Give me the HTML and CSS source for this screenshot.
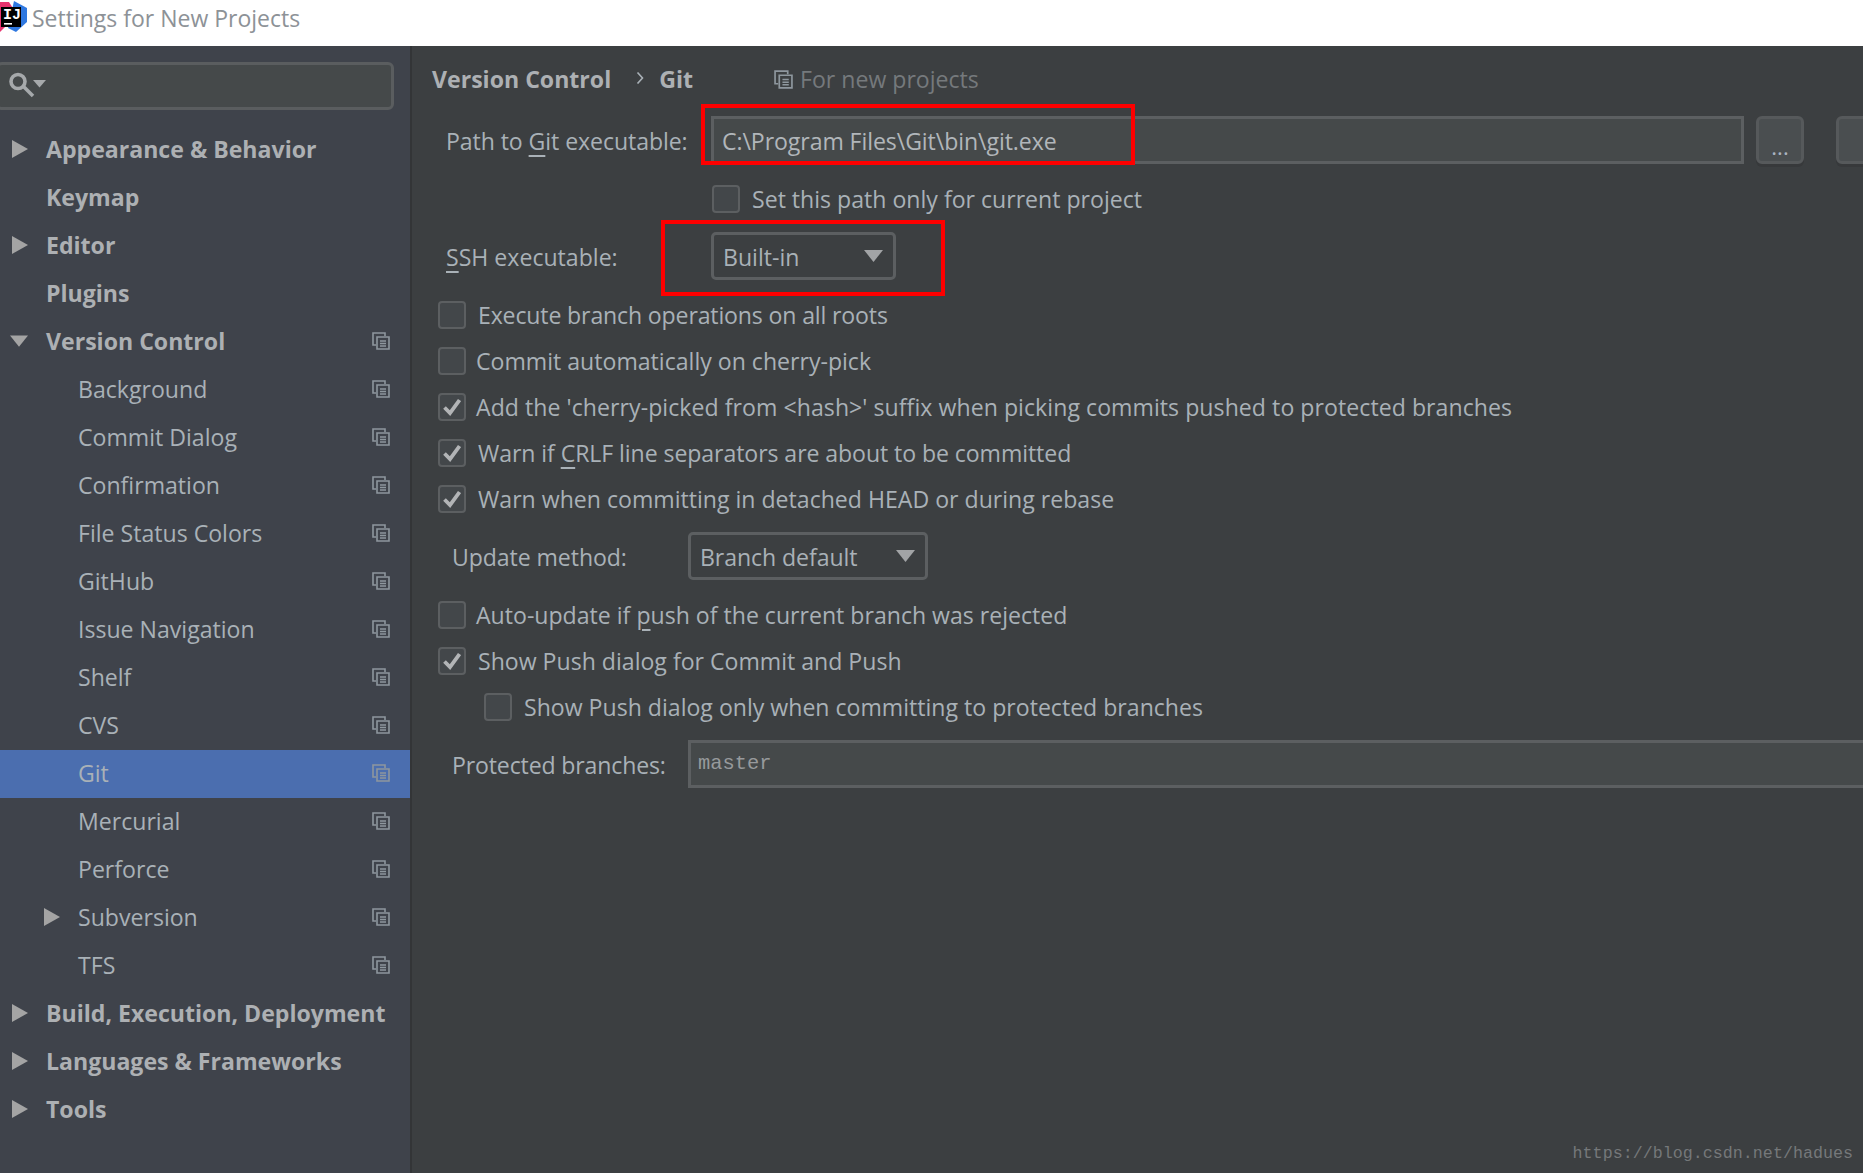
FILE: index.html
```html
<!DOCTYPE html>
<html lang="en">
<head>
<meta charset="utf-8">
<title>Settings for New Projects</title>
<link rel="stylesheet" href="styles.css">
</head>
<body>
<svg class="defs" width="0" height="0" aria-hidden="true">
  <symbol id="copy" viewBox="0 0 18 18">
    <path d="M4 13H1V1h12v3" fill="none" stroke="currentColor" stroke-width="1.6"/>
    <path d="M5 5h12v12H5z" fill="none" stroke="currentColor" stroke-width="1.6"/>
    <path d="M8 9h6M8 11.5h6M8 14h6" fill="none" stroke="currentColor" stroke-width="1.4"/>
  </symbol>
  <symbol id="arrow" viewBox="0 0 16 18"><path d="M0 0l16 9L0 18z" fill="currentColor"/></symbol>
  <symbol id="down" viewBox="0 0 16 10"><path d="M0 0h16L8 10z" fill="currentColor"/></symbol>
  <symbol id="check" viewBox="0 0 18 18"><path d="M1.5 9.500L7 15 16.500 2" fill="none" stroke="currentColor" stroke-width="3.8"/></symbol>
</svg>
<div class="page">
  <header class="titlebar">
    <svg class="logo" width="28" height="32" viewBox="0 0 28 32">
      <path d="M0 2l9 0 5 8-6 14-8 8z" fill="#e8336f"/>
      <path d="M14 1l13 7v14l-11 10-8-4z" fill="#2f78e0"/>
      <path d="M1 7h20v20H1z" fill="#000"/>
      <text x="3" y="19" class="logo-text">IJ</text>
      <path d="M4 23h8v1.6H4z" fill="#fff"/>
    </svg>
    <span class="title">Settings for New Projects</span>
  </header>
  <div class="main">
    <nav class="sidebar">
      <div class="search">
        <svg class="search-icon" width="44" height="28" viewBox="0 0 44 28">
          <circle cx="14" cy="9.500" r="7" fill="none" stroke="#a6a9ab" stroke-width="3.6"/>
          <path d="M19.500 14.500l9.500 9.500" stroke="#a6a9ab" stroke-width="3.6"/>
          <path d="M29 8h13l-6.500 7.500z" fill="#a6a9ab"/>
        </svg>
      </div>
      <ul class="tree">
        <li class="row top"><svg class="arrow"><use href="#arrow"/></svg>Appearance &amp; Behavior</li>
        <li class="row top">Keymap</li>
        <li class="row top"><svg class="arrow"><use href="#arrow"/></svg>Editor</li>
        <li class="row top">Plugins</li>
        <li class="row top"><svg class="arrow open"><use href="#down"/></svg>Version Control<svg class="copy"><use href="#copy"/></svg></li>
        <li class="row sub">Background<svg class="copy"><use href="#copy"/></svg></li>
        <li class="row sub">Commit Dialog<svg class="copy"><use href="#copy"/></svg></li>
        <li class="row sub">Confirmation<svg class="copy"><use href="#copy"/></svg></li>
        <li class="row sub">File Status Colors<svg class="copy"><use href="#copy"/></svg></li>
        <li class="row sub">GitHub<svg class="copy"><use href="#copy"/></svg></li>
        <li class="row sub">Issue Navigation<svg class="copy"><use href="#copy"/></svg></li>
        <li class="row sub">Shelf<svg class="copy"><use href="#copy"/></svg></li>
        <li class="row sub">CVS<svg class="copy"><use href="#copy"/></svg></li>
        <li class="row sub selected">Git<svg class="copy"><use href="#copy"/></svg></li>
        <li class="row sub">Mercurial<svg class="copy"><use href="#copy"/></svg></li>
        <li class="row sub">Perforce<svg class="copy"><use href="#copy"/></svg></li>
        <li class="row sub"><svg class="arrow"><use href="#arrow"/></svg>Subversion<svg class="copy"><use href="#copy"/></svg></li>
        <li class="row sub">TFS<svg class="copy"><use href="#copy"/></svg></li>
        <li class="row top"><svg class="arrow"><use href="#arrow"/></svg>Build, Execution, Deployment</li>
        <li class="row top"><svg class="arrow"><use href="#arrow"/></svg>Languages &amp; Frameworks</li>
        <li class="row top"><svg class="arrow"><use href="#arrow"/></svg>Tools</li>
      </ul>
    </nav>
    <section class="content">
      <div class="crumbs">
        <strong>Version Control</strong>
        <svg class="chev" width="8" height="12" viewBox="0 0 8 12"><path d="M1.500 0.500L6.500 6l-5 5.500" fill="none" stroke="currentColor" stroke-width="1.6"/></svg>
        <strong>Git</strong>
        <span class="scope"><svg class="copy-small"><use href="#copy"/></svg>For new projects</span>
      </div>
      <div class="form-row path-row">
        <label class="label path-label"><span class="narrow">Path to <u>G</u>it executable:</span></label>
        <div class="field path-field"><span class="narrow">C:\Program Files\Git\bin\git.exe</span></div>
        <div class="btn">...</div>
        <div class="btn btn-cut"></div>
      </div>
      <div class="check-row only-row"><span class="box"></span><span>Set this path only for current project</span></div>
      <div class="form-row ssh-row">
        <label class="label path-label"><u>S</u>SH executable:</label>
        <div class="combo ssh-combo">Built-in<svg class="caret"><use href="#down"/></svg></div>
      </div>
      <div class="check-row first-check"><span class="box"></span><span class="wide tighter">Execute branch operations on all roots</span></div>
      <div class="check-row"><span class="box"></span><span>Commit automatically on cherry-pick</span></div>
      <div class="check-row"><span class="box"><svg class="tick"><use href="#check"/></svg></span><span class="looser">Add the 'cherry-picked from &lt;hash&gt;' suffix when picking commits pushed to protected branches</span></div>
      <div class="check-row"><span class="box"><svg class="tick"><use href="#check"/></svg></span><span class="wide narrow">Warn if <u>C</u>RLF line separators are about to be committed</span></div>
      <div class="check-row"><span class="box"><svg class="tick"><use href="#check"/></svg></span><span class="wide">Warn when committing in detached HEAD or during rebase</span></div>
      <div class="form-row update-row">
        <label class="label wide-label"><span class="narrow">Update method:</span></label>
        <div class="combo update-combo"><span class="narrow">Branch default</span><svg class="caret"><use href="#down"/></svg></div>
      </div>
      <div class="check-row auto-row"><span class="box"></span><span>Auto-update if <u>p</u>ush of the current branch was rejected</span></div>
      <div class="check-row"><span class="box"><svg class="tick"><use href="#check"/></svg></span><span class="wide">Show Push dialog for Commit and Push</span></div>
      <div class="check-row nested"><span class="box"></span><span class="wide">Show Push dialog only when committing to protected branches</span></div>
      <div class="form-row protected-row">
        <label class="label wide-label"><span class="tighter">Protected branches:</span></label>
        <div class="field mono-field">master</div>
      </div>
      <div class="redbox red-path"></div>
      <div class="redbox red-ssh"></div>
      <div class="watermark">https://blog.csdn.net/hadues</div>
    </section>
  </div>
</div>
</body>
</html>
```
FILE: styles.css
```css
* { box-sizing: border-box; }
html, body { margin: 0; padding: 0; background: #3c3f41; }
body { font-family: "Open Sans", "Noto Sans", sans-serif; font-size: 23.1px; color: #a9b1b7; }
.defs { position: absolute; }
.page { width: 1863px; height: 1173px; overflow: hidden; display: flex; flex-direction: column; }

.narrow { letter-spacing: -0.08px; }
.tighter { letter-spacing: -0.15px; }
.looser { letter-spacing: 0.05px; }

.titlebar { height: 46px; flex: none; background: #fff; display: flex; align-items: center; gap: 4px; }
.logo { flex: none; margin-top: -14px; }
.logo-text { font-family: "Liberation Mono", monospace; font-weight: 700; font-size: 15px; fill: #fff; }
.title { color: #8d9297; font-size: 23px; margin-top: -10px; }

.main { flex: 1; display: flex; min-height: 0; }
.sidebar { width: 412px; flex: none; background: #3f434b; border-right: 2px solid #333537; padding-top: 16px; }
.search { width: 398px; height: 48px; margin-left: -4px; background: #45494a; border: 3px solid #5a5d5f; border-radius: 6px; display: flex; align-items: center; padding-left: 4.5px; }
.tree { list-style: none; margin: 16px 0 0; padding: 0; }
.row { height: 48px; padding-bottom: 2px; display: flex; align-items: center; position: relative; color: #a9b1b7; }
.top { padding-left: 46px; font-weight: 700; color: #adb0b3; }
.sub { padding-left: 78px; }
.selected { background: #4b6eaf; }
.arrow { position: absolute; top: 14px; width: 16px; height: 18px; color: #a4a4a4; }
.top .arrow { left: 12px; }
.sub .arrow { left: 44px; }
.top .arrow.open { width: 18px; height: 14px; top: 16px; left: 10px; }
.copy { position: absolute; right: 20px; top: 14px; width: 18px; height: 18px; color: #8e979e; }

.content { flex: 1; position: relative; min-width: 0; padding-left: 20px; }
.crumbs { height: 36px; margin-top: 15px; display: flex; align-items: center; }
.crumbs strong { color: #adb0b3; font-weight: 700; }
.chev { margin: 0 15px 2px 25px; color: #a9b1b7; flex: none; }
.scope { display: flex; align-items: center; gap: 7px; margin-left: 81px; color: #75797c; }
.copy-small { width: 19px; height: 19px; color: #8e979e; }

.form-row { display: flex; align-items: center; }
.label { flex: none; }
.path-label { width: 279px; padding: 1px 0 0 14px; }
.wide-label { width: 256px; padding: 1px 0 0 20px; }
u { text-underline-offset: 5px; text-decoration-thickness: 2px; }

.path-row { height: 48px; margin-top: 19px; width: 1500px; }
.field { height: 48px; background: #45494a; border: 3px solid #5c5f61; display: flex; align-items: center; }
.path-field { width: 1033px; padding: 2px 0 0 8px; color: #b1b6ba; }
.btn { width: 48px; height: 48px; margin-left: 12px; background: #4a4e50; border: 3px solid #56595b; border-radius: 6px; box-shadow: 0 3px 0 #37393b; display: flex; align-items: flex-end; justify-content: center; padding-bottom: 2px; flex: none; line-height: 26px; color: #aab4c0; font-size: 22px; }
.btn-cut { margin-left: 32px; }

.check-row { display: flex; align-items: center; height: 46px; margin-left: 6px; }
.box { width: 28px; height: 28px; flex: none; background: #43474a; border: 2.5px solid #5c5f61; border-radius: 4px; margin-right: 10px; display: flex; align-items: center; justify-content: center; }
.wide { margin-left: 2px; }
.tick { width: 18px; height: 18px; color: #b2b4b6; }
.only-row { margin-left: 280px; margin-top: 12px; }
.only-row .box { margin-right: 12px; }
.ssh-row { height: 48px; margin-top: 10px; }
.combo { height: 48px; position: relative; border: 3px solid #5c5f61; border-radius: 5px; background: #3c3f41; display: flex; align-items: center; padding: 2px 0 0 9px; flex: none; }
.ssh-combo { width: 185px; }
.update-combo { width: 240px; }
.caret { position: absolute; right: 10px; top: 15px; width: 19px; height: 12px; color: #a2a4a6; }
.first-check { margin-top: 12px; }
.nested { margin-left: 52px; }
.update-row { height: 48px; margin-top: 10px; }
.auto-row { margin-top: 12px; }
.protected-row { height: 48px; margin-top: 10px; }
.mono-field { flex: 1; padding: 0 0 2px 7px; border-right: 0; font-family: "Liberation Mono", monospace; font-size: 20.4px; color: #979a9c; }

.redbox { position: absolute; border: 4.5px solid #fe0000; }
.red-path { left: 289px; top: 58px; width: 434px; height: 61px; }
.red-ssh { left: 249px; top: 174px; width: 284px; height: 76px; }
.watermark { position: absolute; right: 10px; bottom: 10px; font-family: "Liberation Mono", monospace; font-size: 16.7px; color: #75787a; }
```
